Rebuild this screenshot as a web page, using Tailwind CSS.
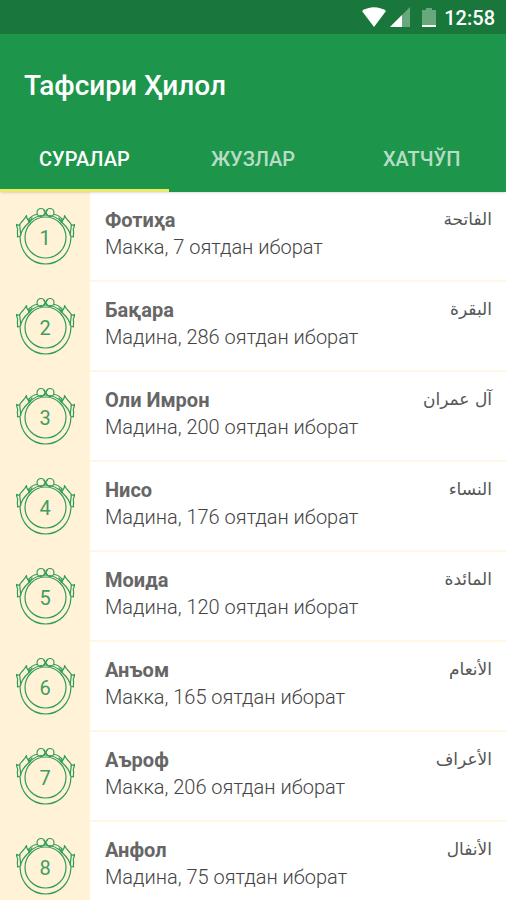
<!DOCTYPE html>
<html lang="uz-Cyrl">
<head>
  <meta charset="UTF-8" />
  <title>Тафсири Ҳилол</title>
  <script src="https://cdn.jsdelivr.net/npm/@tailwindcss/browser@4"></script>
  <meta name="viewport" content="width=device-width, initial-scale=1.0">
</head>
<body class="bg-white min-h-screen font-[Roboto,sans-serif] text-[#666666]">

  <!-- Shared medallion drawing -->
  <svg class="hidden" aria-hidden="true">
    <symbol id="medallion" viewBox="0 0 60 60">
      <g fill="none" stroke="#2f9c58" stroke-width="1.2" stroke-linecap="round" stroke-linejoin="round">
        <circle cx="30.500" cy="30.500" r="20.5" />
        <path d="M5 30C5.500 46 16.500 57 30.500 57S55.500 46 56 30" />
        <circle cx="26" cy="5.500" r="4" />
        <circle cx="35" cy="5.500" r="4" />
        <path d="M22.500 7.500C19 7.500 16.500 9 14 12M38.500 7.500C42 7.500 44.500 9 47 12M14 15.500C19 10 24 8 30.500 8S42 10 47 15.500M28.500 8L32.500 3M32.500 8L28.500 3" />
        <path d="M11.500 8.500C10 12 7 14 5 17C4 19 2 18 1.500 17.500C1.500 21 3.500 22 2.500 24C2 26 3 28 2.500 30L5.500 29C6 24 9 20 14 15.500C14 13 11 12 11.500 8.500M5 17C4 20 6 22 5.500 29M14 12L14 15.500L17 11" />
        <path d="M49.500 8.500C51 12 54 14 56 17C57 19 59 18 59.500 17.500C59.500 21 57.500 22 58.500 24C59 26 58 28 58.500 30L55.500 29C55 24 52 20 47 15.500C47 13 50 12 49.500 8.500M56 17C57 20 55 22 55.500 29M47 12L47 15.500L44 11" />
      </g>
    </symbol>
  </svg>

  <header class="relative bg-[#1d954b] text-white shadow-sm">
    <!-- Status bar -->
    <div class="flex h-[34px] items-center justify-end bg-[#19773b] pr-[11px]">
      <svg class="mr-1 h-5 w-6" viewBox="0 0 24 20" fill="#fff"><path d="M0 4C7-1 17-1 24 4L12 20Z" /></svg>
      <svg class="mr-3 h-5 w-5" viewBox="0 0 20 20"><path d="M0 20L20 0V20Z" fill="#67a87d" /><path d="M0 20L12 8V20Z" fill="#fff" /></svg>
      <svg class="mr-2 h-5 w-3.5" viewBox="0 0 14 20"><path d="M0 3H4V1H10V3H14V18H0Z" fill="#67a87d" /><path d="M0 18H14V20H0Z" fill="#fff" /></svg>
      <time class="pt-0.5 text-xl font-medium leading-8">12:58</time>
    </div>

    <h1 class="px-6 pt-8 text-[28px] font-medium leading-10">Тафсири Ҳилол</h1>

    <!-- Tabs -->
    <nav class="mt-5 grid grid-cols-3 text-center text-xl font-medium">
      <a href="#" class="border-b-3 border-[#ecea6b] pt-[17px] pb-3.5 leading-8">СУРАЛАР</a>
      <a href="#" class="border-b-3 border-transparent pt-[17px] pb-3.5 leading-8 text-white/70">ЖУЗЛАР</a>
      <a href="#" class="border-b-3 border-transparent pt-[17px] pb-3.5 leading-8 text-white/70">ХАТЧЎП</a>
    </nav>
  </header>

  <!-- Sura list -->
  <ul id="suras"></ul>

  <script>
    const suras = [
      ["Фотиҳа", "Макка, 7 оятдан иборат", "الفاتحة"],
      ["Бақара", "Мадина, 286 оятдан иборат", "البقرة"],
      ["Оли Имрон", "Мадина, 200 оятдан иборат", "آل عمران"],
      ["Нисо", "Мадина, 176 оятдан иборат", "النساء"],
      ["Моида", "Мадина, 120 оятдан иборат", "المائدة"],
      ["Анъом", "Макка, 165 оятдан иборат", "الأنعام"],
      ["Аъроф", "Макка, 206 оятдан иборат", "الأعراف"],
      ["Анфол", "Мадина, 75 оятдан иборат", "الأنفال"]
    ];

    document.getElementById("suras").innerHTML = suras.map(([name, info, arabic], i) => `
      <li class="flex h-[90px]">
        <div class="flex w-[90px] shrink-0 justify-center bg-[#fff2d6] pt-[15px]">
          <div class="grid h-[60px] w-[60px] place-items-center text-xl text-[#3f9d60]">
            <svg class="col-start-1 row-start-1 h-[60px] w-[60px]"><use href="#medallion" /></svg>
            <span class="col-start-1 row-start-1 pt-0.5">${i + 1}</span>
          </div>
        </div>
        <div class="flex grow justify-between border-b-2 border-[#fff7e4] pt-[15px] pr-3.5 pl-[15px]">
          <div class="text-xl leading-[27px]">
            <h2 class="font-bold">${name}</h2>
            <p class="font-light text-[#444444]">${info}</p>
          </div>
          <span lang="ar" dir="rtl" class="font-['DejaVu_Sans',sans-serif] text-[17px] leading-6 text-[#555555]">${arabic}</span>
        </div>
      </li>`).join("");
  </script>

</body>
</html>
